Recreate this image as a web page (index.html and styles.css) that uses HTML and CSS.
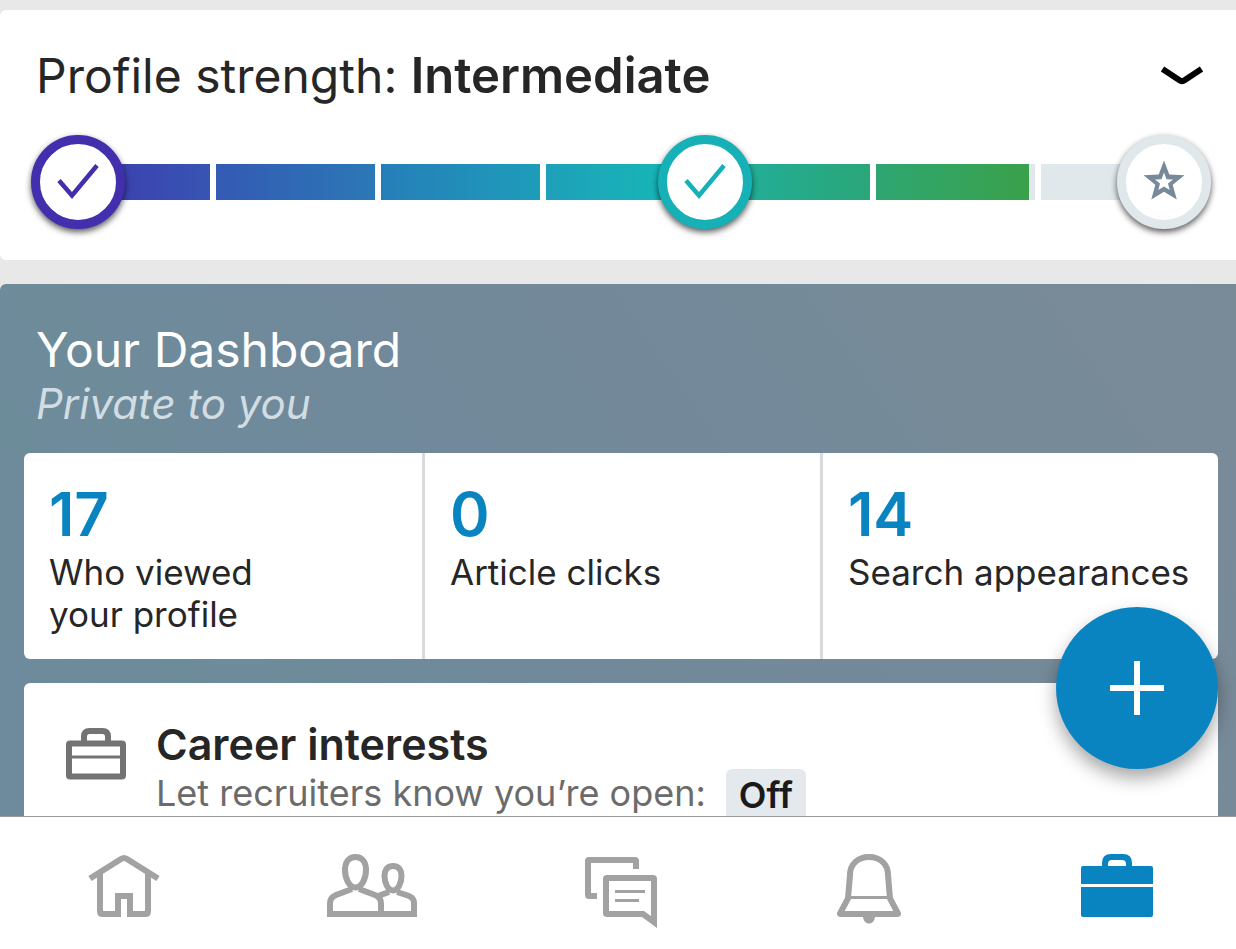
FILE: index.html
```html
<!DOCTYPE html>
<html lang="en">
<head>
<meta charset="utf-8">
<meta name="viewport" content="width=device-width, initial-scale=1">
<title>Profile</title>
<link rel="stylesheet" href="styles.css">
</head>
<body>
<main class="feed">
  <section class="strength">
    <header class="strength-head">
      <h2 class="title">Profile strength: <strong>Intermediate</strong></h2>
      <button class="toggle" type="button" aria-label="Toggle details">
        <svg width="44" height="24" viewBox="0 0 44 24" fill="none" stroke="#000" stroke-width="6"><path d="M2.500 5 19.500 16.300Q22 18 24.500 16.300L41.500 5"/></svg>
      </button>
    </header>
    <div class="track">
      <span class="segment s1"></span>
      <span class="segment s2"></span>
      <span class="segment s3"></span>
      <span class="segment s4"></span>
      <span class="segment s5"></span>
      <span class="segment s6"></span>
      <span class="segment s7"></span>
      <span class="marker start"><svg width="46" height="46" viewBox="0 0 46 46" fill="none" stroke="currentColor" stroke-width="4.500"><path d="M4 21.500 17 36.500 42 6.500"/></svg></span>
      <span class="marker middle"><svg width="46" height="46" viewBox="0 0 46 46" fill="none" stroke="currentColor" stroke-width="4.500"><path d="M4 21.500 17 36.500 42 6.500"/></svg></span>
      <span class="marker end"><svg width="46" height="46" viewBox="0 0 46 46" fill="#788a99" fill-rule="evenodd"><path d="M23 1.500 28.300 15.500 43.500 16.200 31.700 25.700 35.800 40.500 23 32.800 10.300 40.500 14.300 25.700 2.500 16.200 17.700 15.500ZM23 13.500 20.500 20.200 14 20.500 19 24.600 17.300 31 23 27.500 28.700 31 27 24.600 32 20.500 25.500 20.200Z"/></svg></span>
    </div>
  </section>

  <section class="dashboard">
    <header class="dashboard-head">
      <h2 class="title">Your Dashboard</h2>
      <p class="private">Private to you</p>
    </header>
    <div class="stats">
      <a class="stat" href="#views"><span class="count">17</span><span class="label">Who viewed<br>your profile</span></a>
      <a class="stat" href="#clicks"><span class="count">0</span><span class="label">Article clicks</span></a>
      <a class="stat" href="#searches"><span class="count">14</span><span class="label">Search appearances</span></a>
    </div>
    <a class="career" href="#career">
      <svg class="career-icon" width="60" height="52" viewBox="0 0 60 52" fill="none" stroke="#737373"><rect x="3" y="15.500" width="54" height="33" rx="1" stroke-width="6"/><path d="M3 29h54" stroke-width="3"/><path d="M18 15V8.500Q18 3 23.500 3H36.500Q42 3 42 8.500V15" stroke-width="6"/></svg>
      <span class="career-text">
        <strong class="career-title">Career interests</strong>
        <span class="career-line">Let recruiters know you’re open: <span class="badge">Off</span></span>
      </span>
    </a>
  </section>
  <button class="compose" type="button" aria-label="Add">
    <svg width="54" height="54" viewBox="0 0 54 54" fill="none" stroke="#fff" stroke-width="6"><path d="M27 0v54M0 27h54"/></svg>
  </button>
</main>

<nav class="tabs" aria-label="Main">
  <a class="tab" href="#home" aria-label="Home"><svg width="72" height="64" viewBox="0 0 72 64" fill="none" stroke="currentColor" stroke-width="6"><path d="M2 24.500 33 5Q36 3 39 5L70 24.500"/><path d="M12 18V57.500Q12 60 14.500 60H30V42H42V60H57.500Q60 60 60 57.500V18"/></svg></a>
  <a class="tab" href="#network" aria-label="My network"><svg width="90" height="64" viewBox="0 0 90 64" fill="none" stroke="currentColor" stroke-width="6"><path d="M28.500 3C21 3 18 9 18 16C18 24 22 33.500 28.500 33.500S39 24 39 16C39 9 36 3 28.500 3Z"/><path d="M25 35 9 41Q3 43.500 3 49.500V60H87V49Q87 44 82 42L70 38"/><path d="M32 35 48 41Q54 43.500 54 49.500V60"/><path d="M66 12C60 12 57.500 16.500 57.500 22C57.500 29 61 36.500 66 36.500S74.500 29 74.500 22C74.500 16.500 72 12 66 12ZM62 38 51 42"/></svg></a>
  <a class="tab" href="#messages" aria-label="Messaging"><svg width="72" height="75" viewBox="0 -3 72 75" fill="none" stroke="currentColor" stroke-width="6"><path d="M12 39H4Q3 39 3 38V4Q3 3 4 3H50Q51 3 51 4V12"/><path d="M69 65V22Q69 21 68 21H22Q21 21 21 22V56Q21 57 22 57H58Z"/><path d="M30 34.500H60M30 43.500H54" stroke-width="3"/></svg></a>
  <a class="tab" href="#notifications" aria-label="Notifications"><svg width="66" height="70" viewBox="0 0 66 70" fill="none" stroke="currentColor" stroke-width="6"><path d="M12 44.500 14 21C14 10 22 3 33 3S52 10 52 21L54 44.500 62 59.500Q62 60 61 60H5Q4 60 4 59.500Z"/><path d="M13 43.500H53" stroke-width="3"/><path d="M27 62H39C39 72 27 72 27 62Z" fill="currentColor" stroke="none"/></svg></a>
  <a class="tab active" href="#jobs" aria-label="Jobs" aria-current="page"><svg width="72" height="64" viewBox="0 0 72 64" fill="currentColor"><path d="M0 30V14Q0 12 2 12H21V9Q21 0 30 0H42Q51 0 51 9V12H70Q72 12 72 14V30ZM27 12H45V10Q45 6 41 6H31Q27 6 27 10Z"/><path d="M0 33H72V61Q72 63 70 63H2Q0 63 0 61Z"/></svg></a>
</nav>
</body>
</html>
```
FILE: styles.css
```css
* { box-sizing: border-box; }

body {
  margin: 0;
  height: 100vh;
  display: flex;
  flex-direction: column;
  background: #e8e8e8;
  color: #262626;
  font-family: Inter, "Liberation Sans", sans-serif;
  font-optical-sizing: none;
}

a { color: inherit; text-decoration: none; }
button { border: 0; padding: 0; background: none; cursor: pointer; }
svg { display: block; }

.feed {
  position: relative;
  flex: 1;
  min-height: 0;
  overflow: hidden;
  display: flex;
  flex-direction: column;
  gap: 24px;
  padding-top: 10px;
}

.title {
  margin: 0;
  font-size: 48px;
  line-height: 60px;
  font-weight: 400;
}
.title strong { font-size: 49px; font-weight: 600; }

.strength {
  flex: none;
  padding: 36px 32px 60px 36px;
  background: #fff;
  border-radius: 6px 0 0 6px;
}
.strength-head {
  display: flex;
  align-items: center;
  justify-content: space-between;
}

.track {
  position: relative;
  display: grid;
  grid-template-columns: repeat(7, 1fr);
  gap: 6px;
  margin: 58px 4px 0 15px;
}
.segment { height: 36px; background: #e0e8ec; }
.s1 { background: linear-gradient(90deg, #3f35ae, #3755b3); }
.s2 { background: linear-gradient(90deg, #345ab4, #2b78b6); }
.s3 { background: linear-gradient(90deg, #267eb8, #1d9dba); }
.s4 { background: linear-gradient(90deg, #1fa0ba, #16b6b7 75%); }
.s5 { background: linear-gradient(90deg, #20b0a0, #2aa678); }
.s6 { background: linear-gradient(90deg, #2ea672, #3aa14a 153px, #e0e8ec 153px); }

.marker {
  position: absolute;
  top: 50%;
  width: 94px;
  height: 94px;
  display: grid;
  place-items: center;
  background: #fff;
  border: 9px solid currentColor;
  border-radius: 50%;
  transform: translate(-50%, -50%);
  box-shadow: 0 3px 6px rgba(0, 0, 0, 0.65);
}
.start { left: 27px; color: #412fae; }
.middle { left: calc(57% - 1px); color: #16b0b7; }
.end { left: calc(100% - 36px); color: #e0e8ec; }

.dashboard {
  flex: none;
  padding: 36px 18px 24px 24px;
  background: linear-gradient(235deg, #7a8b98, #71899a 55%, #6d8c9a 80%, #6d8a9e);
  border-radius: 6px 0 0 6px;
}
.dashboard-head { padding: 0 12px 25px; color: #fff; }
.private {
  margin: 0;
  font-size: 42px;
  line-height: 48px;
  font-style: italic;
  color: #d2dde3;
}

.stats {
  display: grid;
  grid-template-columns: repeat(3, minmax(0, 1fr));
  overflow: hidden;
  background: #fff;
  border-radius: 6px;
}
.stat {
  display: flex;
  flex-direction: column;
  padding: 24px 25px;
}
.stat + .stat { border-left: 3px solid #d8dadc; }
.count {
  font-size: 60px;
  line-height: 74px;
  font-weight: 600;
  color: #0a84c1;
}
.label {
  font-size: 35px;
  line-height: 42px;
  white-space: nowrap;
}

.career {
  display: flex;
  gap: 30px;
  margin-top: 24px;
  padding: 36px 42px;
  background: #fff;
  border-radius: 6px;
}
.career-icon { flex: none; margin-top: 9px; }
.career-text { display: flex; flex-direction: column; }
.career-title {
  font-size: 43px;
  line-height: 50px;
  font-weight: 600;
}
.career-line {
  display: flex;
  align-items: flex-start;
  gap: 20px;
  font-size: 36px;
  line-height: 48px;
  color: #6b6b6b;
}
.badge {
  padding: 2px 13px;
  background: #e3e9ec;
  border-radius: 6px;
  color: #1a1a1a;
  font-weight: 600;
}

.compose {
  position: absolute;
  right: 18px;
  bottom: 47px;
  width: 162px;
  height: 162px;
  display: grid;
  place-items: center;
  background: #0a84c1;
  border-radius: 50%;
  box-shadow: 0 9px 18px rgba(0, 0, 0, 0.35);
}

.tabs {
  flex: none;
  display: flex;
  justify-content: space-between;
  padding: 37px 74px 24px 79px;
  background: #fff;
  border-top: 1px solid #999;
}
.tab {
  display: flex;
  justify-content: center;
  width: 90px;
  height: 71px;
  color: #a2a2a2;
}
.active { color: #0a84c1; }
```
